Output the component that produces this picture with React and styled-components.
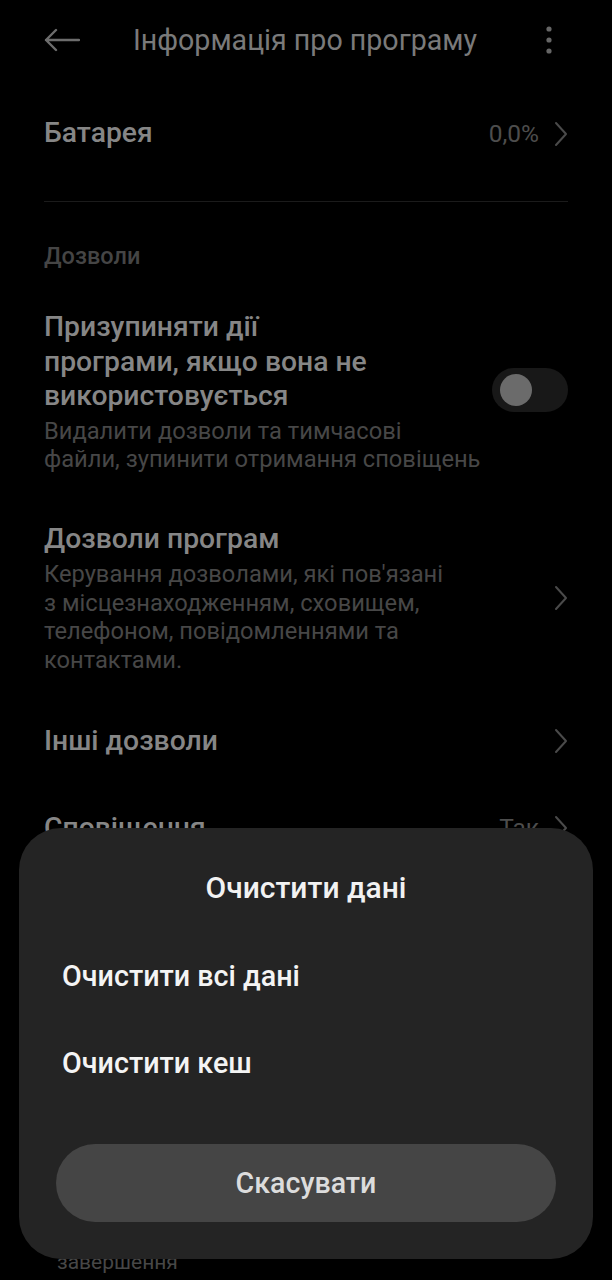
import React from 'react'
import styled, { createGlobalStyle } from 'styled-components'

//STYLE
const GlobalStyle = createGlobalStyle`
  html, body {
    margin: 0;
    padding: 0;
    background: #000;
  }
  body {
    font-family: Roboto, "Noto Sans", "Liberation Sans", sans-serif;
    -webkit-font-smoothing: antialiased;
  }
`

const Screen = styled.div`
  position: relative;
  width: 612px;
  height: 1280px;
  overflow: hidden;
  background: #000;
`

const TopBar = styled.header`
  display: flex;
  align-items: center;
  height: 80px;
  padding: 0 53px 0 44px;
  color: #7a7a7a;
  .title {
    flex: 1;
    margin-left: 53px;
    font-size: 28.6px;
    font-weight: 400;
    white-space: nowrap;
  }
`

const IconBtn = styled.div`
  display: flex;
  align-items: center;
  justify-content: center;
  width: ${p => p.w || 36}px;
  height: 36px;
`

const List = styled.div`
  padding: 0 44px;
`

const Row = styled.div`
  display: flex;
  align-items: center;
  gap: 15px;
  min-height: ${p => p.h || 0}px;
  padding: ${p => p.pad || '0'};
  box-sizing: border-box;
  border-bottom: ${p => (p.divider ? '1px solid #1b1b1b' : 'none')};
`

const RowText = styled.div`
  flex: 1;
  min-width: 0;
  display: flex;
  flex-direction: column;
`

const RowTitle = styled.div`
  font-size: 28.3px;
  font-weight: 500;
  line-height: 34.5px;
  color: #868686;
  white-space: nowrap;
`

const RowSub = styled.div`
  font-size: 23.7px;
  line-height: 28.5px;
  color: #474747;
  margin-top: ${p => p.mt || 3}px;
  white-space: nowrap;
`

const RowValue = styled.span`
  font-size: 24.5px;
  color: #4d4d4d;
`

const SectionLabel = styled.div`
  font-size: 23.5px;
  font-weight: 500;
  line-height: 28px;
  color: #454545;
  padding: 40px 0;
`

const Note = styled.div`
  padding: 403px 0 0 13px;
  font-size: 21px;
  line-height: 28px;
  color: #474747;
`

const Toggle = styled.div`
  width: 76px;
  height: 44px;
  border-radius: 22px;
  background: #181818;
  display: flex;
  align-items: center;
  padding-left: 8px;
  box-sizing: border-box;
  flex-shrink: 0;
  margin-top: -4px;
  &::before {
    content: '';
    width: 32px;
    height: 32px;
    border-radius: 50%;
    background: #6b6b6b;
  }
`

const Sheet = styled.div`
  position: absolute;
  left: 19px;
  right: 19px;
  top: 828px;
  height: 431px;
  border-radius: 42px;
  background: #242424;
  display: flex;
  flex-direction: column;
  padding: 36px 37px 0;
  box-sizing: border-box;
`

const SheetTitle = styled.div`
  text-align: center;
  font-size: 30px;
  font-weight: 500;
  color: #f2f2f2;
  line-height: 48px;
  margin-bottom: 40px;
`

const SheetOption = styled.div`
  font-size: 28.7px;
  font-weight: 500;
  color: #f4f4f4;
  line-height: 48px;
  padding: 0 6px;
  margin-bottom: ${p => p.mb || 39}px;
`

const CancelButton = styled.div`
  height: 78px;
  border-radius: 39px;
  background: #454545;
  color: #dcdcdc;
  font-size: 28.6px;
  font-weight: 500;
  display: flex;
  align-items: center;
  justify-content: center;
`

//-Components
const Chevron = () => (
  <svg width="14" height="26" viewBox="0 0 14 26" fill="none">
    <path d="M2 2 L12 13 L2 24" stroke="#4a4a4a" strokeWidth="2" strokeLinecap="round" strokeLinejoin="round" />
  </svg>
)

const BackArrow = () => (
  <svg width="36" height="24" viewBox="0 0 36 24" fill="none">
    <path d="M35 12 H2 M12 2 L2 12 L12 22" stroke="#6d6d6d" strokeWidth="2.4" strokeLinecap="round" strokeLinejoin="round" />
  </svg>
)

const MoreDots = () => (
  <svg width="8" height="28" viewBox="0 0 8 28">
    <circle cx="4" cy="3" r="2.6" fill="#666" />
    <circle cx="4" cy="14" r="2.6" fill="#666" />
    <circle cx="4" cy="25" r="2.6" fill="#666" />
  </svg>
)

//MAIN COMPONENT
function App() {
  return (
    <Screen>
      <GlobalStyle />
      <TopBar>
        <IconBtn><BackArrow /></IconBtn>
        <div className="title">Інформація про програму</div>
        <IconBtn w={20}><MoreDots /></IconBtn>
      </TopBar>

      <List>
        <Row h={122} pad="0 0 14px" divider>
          <RowText><RowTitle>Батарея</RowTitle></RowText>
          <RowValue>0,0%</RowValue>
          <Chevron />
        </Row>

        <SectionLabel>Дозволи</SectionLabel>

        <Row pad="0 0 48px">
          <RowText>
            <RowTitle>Призупиняти дії<br />програми, якщо вона не<br />використовується</RowTitle>
            <RowSub>Видалити дозволи та тимчасові<br />файли, зупинити отримання сповіщень</RowSub>
          </RowText>
          <Toggle />
        </Row>

        <Row pad="0 0 50px">
          <RowText>
            <RowTitle>Дозволи програм</RowTitle>
            <RowSub mt={4}>Керування дозволами, які пов'язані<br />з місцезнаходженням, сховищем,<br />телефоном, повідомленнями та<br />контактами.</RowSub>
          </RowText>
          <Chevron />
        </Row>

        <Row pad="0 0 52px">
          <RowText><RowTitle>Інші дозволи</RowTitle></RowText>
          <Chevron />
        </Row>

        <Row>
          <RowText><RowTitle>Сповіщення</RowTitle></RowText>
          <RowValue>Так</RowValue>
          <Chevron />
        </Row>

        <Note>завершення</Note>
      </List>

      <Sheet>
        <SheetTitle>Очистити дані</SheetTitle>
        <SheetOption>Очистити всі дані</SheetOption>
        <SheetOption mb={57}>Очистити кеш</SheetOption>
        <CancelButton>Скасувати</CancelButton>
      </Sheet>
    </Screen>
  )
}
export default App;
